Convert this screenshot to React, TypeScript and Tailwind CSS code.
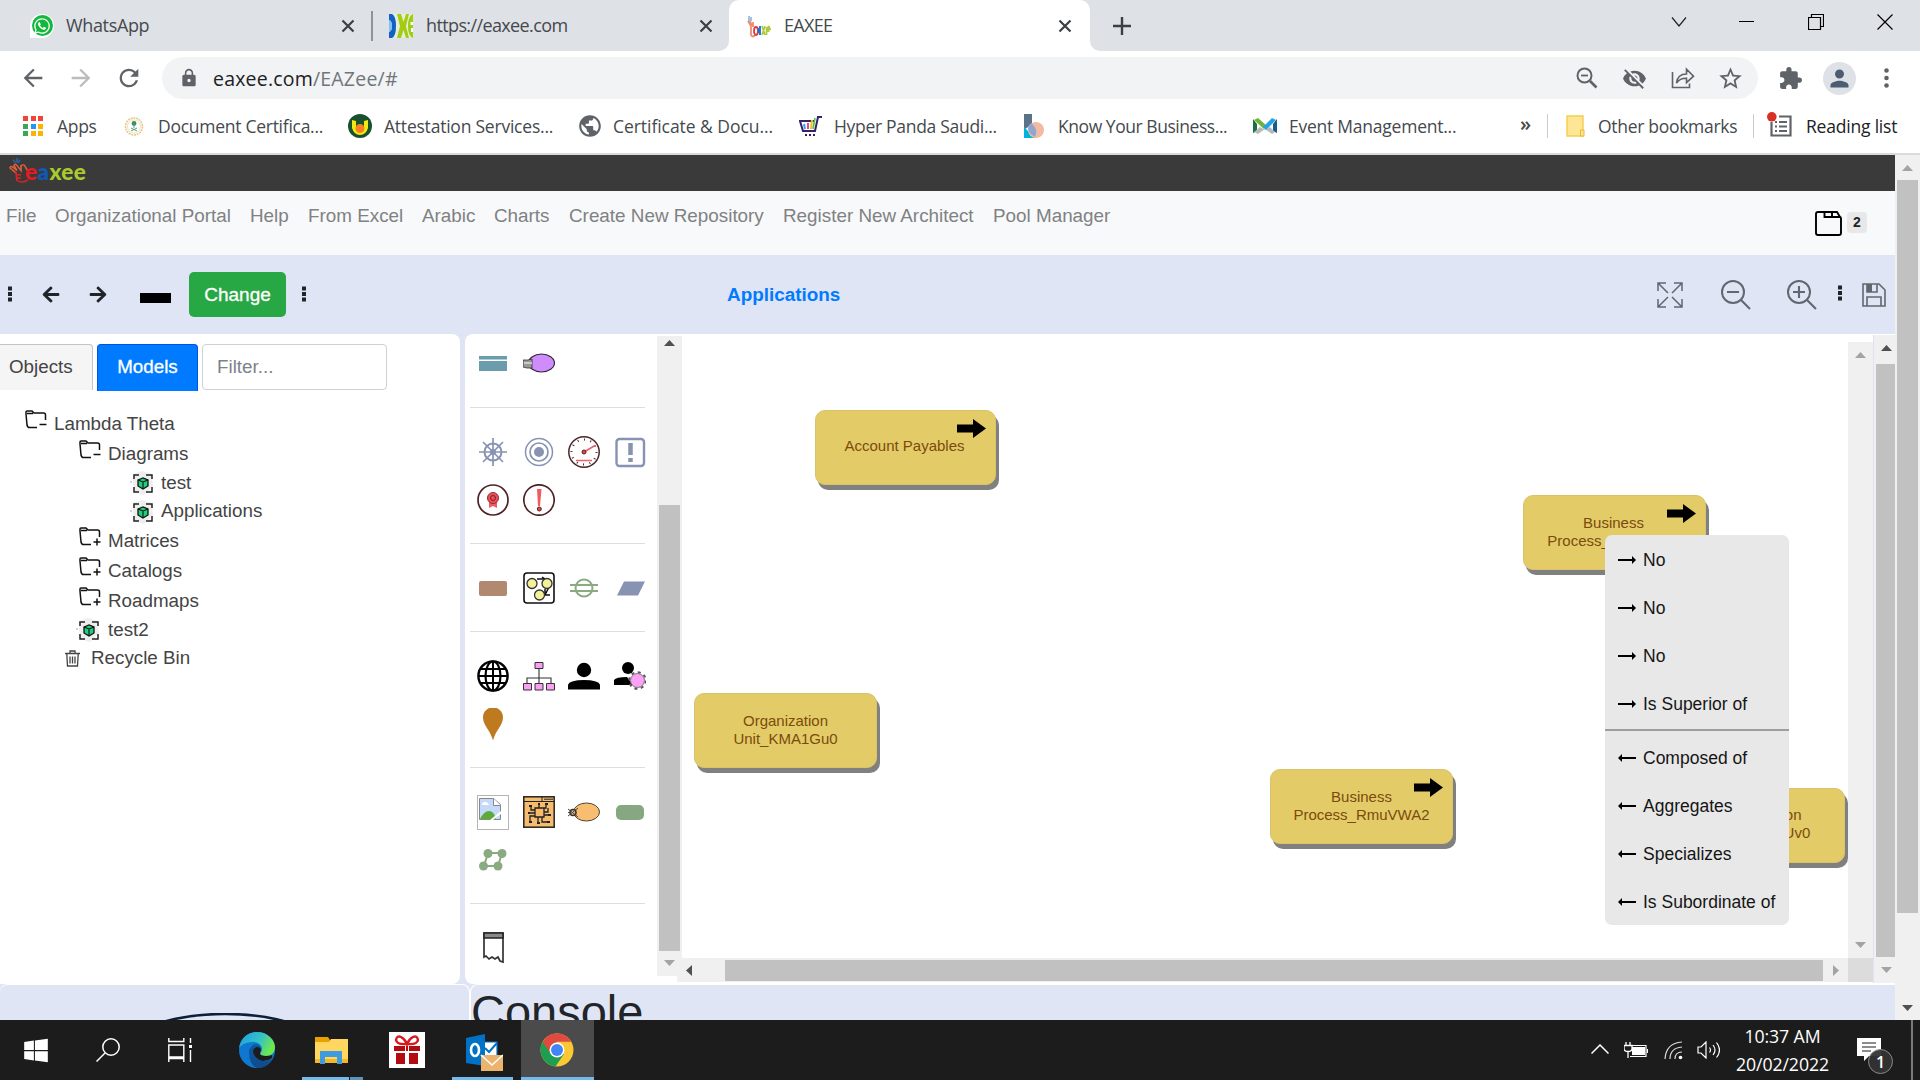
import React from "react";
import { FaArrowLeft, FaArrowRight, FaWhatsapp, FaWindows } from "react-icons/fa";
import {
  MdArrowBack, MdArrowForward, MdRefresh, MdLock, MdExtension, MdStarBorder, MdPerson, MdVisibilityOff, MdPublic,
} from "react-icons/md";

type P = { children?: React.ReactNode; c?: string };
const S = ({ v, c, children }: { v: string; c: string; children: React.ReactNode }) => (
  <svg viewBox={v} className={"shrink-0 block " + c} fill="none" preserveAspectRatio="none">{children}</svg>
);
const T = ({ c = "", children }: P) => (
  <span className={"block shrink-0 whitespace-nowrap " + c}>{children}</span>
);
const Tri = ({ d, c }: { d: "u" | "d" | "l" | "r"; c: string }) => {
  const pts = { u: "0,6 5.5,0 11,6", d: "0,0 5.5,6 11,0", l: "6,0 0,5.5 6,11", r: "0,0 6,5.5 0,11" }[d];
  const vert = d === "u" || d === "d";
  return <S v={vert ? "0 0 11 6" : "0 0 6 11"} c={vert ? "w-[11px] h-[6px]" : "w-[6px] h-[11px]"}><polygon points={pts} fill={c} /></S>;
};
const X = ({ c = "" }: P) => (
  <S v="0 0 14 14" c={"w-[14px] h-[14px] " + c}><path d="M1.5 1.5l11 11M12.5 1.5l-11 11" stroke="#3c4043" strokeWidth="2.2" /></S>
);

const Hand = () => (
  <>
    <path d="M4 2l3 4M8 0v5M11 2l-2 4" stroke="#2a5f98" strokeWidth="1.8" />
    <path d="M7 18L1 12q0-3 3-1l4 4-3-6q1-3 3 0l4 6 0-6q3-2 4 1l3 6" stroke="#e0603c" strokeWidth="1.6" />
    <path d="M7 17l1 10q6 4 11-1M7 20h5M7 24h5" stroke="#d82424" strokeWidth="1.8" />
  </>
);

function TabStrip() {
  return (
    <div className="flex h-[51px] items-center bg-[#dee1e6] text-[18px] tracking-[-0.35px] text-[#45494d]">
      <div className="flex w-[371px] items-center pl-[30px]">
        <span className="flex h-6 w-6 items-center justify-center rounded-full rounded-bl-none bg-white"><span className="flex h-[21px] w-[21px] items-center justify-center rounded-full bg-[#12b83c]"><FaWhatsapp className="h-[18px] w-[18px] text-white" /></span></span>
        <T c="ml-3 w-[275px]">WhatsApp</T>
        <X />
      </div>
      <div className="h-[30px] w-[2px] bg-[#909398]" />
      <div className="flex w-[356px] items-center pl-4">
        <S v="0 0 24 24" c="w-6 h-6">
          <rect width="24" height="24" fill="#e6eedb" />
          <path d="M0 0h3q4 2 4 12T3 24H0v-6q3-1 3-6T0 6z" fill="#1261c4" /><path d="M0 6q3 1 3 6t-3 6z" fill="#7fc2ee" />
          <path d="M8 0h4l2.500 8L17 0h3l-3 12 3 12h-3l-2.500-8L12 24H8l3-12z" fill="#a5cc12" /><path d="M24 0q-5 2-5 12t5 12z" fill="#9bd00f" /><path d="M21.500 8H24v3h-2.500zM22 14h2v4h-2z" fill="#fff" />
        </S>
        <T c="ml-[13px] w-[273px] tracking-[-0.62px]">https://eaxee.com</T>
        <X />
      </div>
      <div className="relative flex h-full w-[361px] items-center rounded-t-[10px] bg-white pl-[18px]">
        <span className="absolute -left-2.5 bottom-0 h-2.5 w-2.5 overflow-hidden bg-white"><span className="block h-2.5 w-2.5 rounded-br-[10px] bg-[#dee1e6]" /></span>
        <span className="absolute -right-2.5 bottom-0 h-2.5 w-2.5 overflow-hidden bg-white"><span className="block h-2.5 w-2.5 rounded-bl-[10px] bg-[#dee1e6]" /></span>
        <S v="0 0 24 24" c="w-6 h-6">
          <path d="M2 2v5M4 3v4" stroke="#7fb0dc" strokeWidth="1.5" /><path d="M1 7l3 5v9q2 3 4 0M3 7l2 5M6 8v5" stroke="#f08a70" strokeWidth="1.8" />
          <ellipse cx="9" cy="17" rx="2" ry="4" stroke="#e23a3a" strokeWidth="1.8" /><path d="M13 12v9M11.500 14v5" stroke="#2a6fd0" strokeWidth="1.9" /><path d="M15 12l3 9M18 12l-3 9M19.500 21v-8l2 5v-6l2 4" stroke="#a9cc3c" strokeWidth="1.7" />
        </S>
        <T c="ml-[13px] w-[274px] tracking-[-0.7px]">EAXEE</T>
        <X />
      </div>
      <S v="0 0 18 18" c="ml-[23px] w-[18px] h-[18px]"><path d="M9 0v18M0 9h18" stroke="#3c4043" strokeWidth="2.4" /></S>
      <S v="0 0 16 10" c="ml-[540px] w-[16px] h-[10px] -mt-[8px]"><path d="M1 .5l7 8.5 7-8.5" stroke="#222" strokeWidth="1.2" /></S>
      <div className="-mt-[8px] ml-[52px] h-[1px] w-[15px] bg-black" />
      <S v="0 0 16 16" c="ml-[54px] w-[16px] h-[16px] -mt-[8px]"><path d="M.5 3.5h12v12H.5zM3.5 3.5v-3h12v12h-3" stroke="#000" strokeWidth="1.2" /></S>
      <S v="0 0 16 16" c="ml-[53px] w-[16px] h-[16px] -mt-[8px]"><path d="M.5.5l15 15M15.5.5l-15 15" stroke="#000" strokeWidth="1.2" /></S>
    </div>
  );
}

function AddressBar() {
  return (
    <div className="flex h-[54px] items-center bg-white text-[#5f6368]">
      <MdArrowBack className="ml-[19px] h-7 w-7" />
      <MdArrowForward className="ml-[20px] h-7 w-7 text-[#babcbe]" />
      <MdRefresh className="ml-[20px] h-7 w-7" />
      <div className="ml-[19px] flex h-[42px] w-[1596px] items-center rounded-full bg-[#f1f3f4]">
        <MdLock className="ml-[17px] h-[20px] w-[20px]" />
        <T c="ml-[14px] mt-[1px] w-[1360px] text-[19.5px] tracking-[0.2px] text-[#70757a]"><span className="text-[#202124]">eaxee.com</span>/EAZee/#</T>
        <S v="0 0 22 22" c="ml-[3px] w-[22px] h-[22px]"><circle cx="8.5" cy="8.5" r="7" stroke="#5f6368" strokeWidth="2" /><path d="M14 14l6.5 6.5" stroke="#5f6368" strokeWidth="2.6" /><path d="M5 8.500h7" stroke="#5f6368" strokeWidth="1.8" /></S>
        <MdVisibilityOff className="ml-[24px] h-[25px] w-[25px]" />
        <S v="0 0 24 22" c="ml-[24px] w-[24px] h-[22px]"><path d="M1.5 5v15.500h17v-4M5.500 16q1-9 10-9V2.200l7 7-7 6.500v-4.500Q9 11 5.500 16z" stroke="#5f6368" strokeWidth="1.6" /></S>
        <MdStarBorder className="ml-[22px] h-[27px] w-[27px]" />
      </div>
      <MdExtension className="ml-[20px] h-[25px] w-[25px]" />
      <span className="ml-[20px] flex h-[33px] w-[33px] items-center justify-center rounded-full bg-[#dee1e6]"><MdPerson className="h-[27px] w-[27px] text-[#4d5c70]" /></span>
      <S v="0 0 5 20" c="ml-[28px] w-[5px] h-[20px]"><circle cx="2.5" cy="2.5" r="2.3" fill="#5f6368" /><circle cx="2.5" cy="10" r="2.3" fill="#5f6368" /><circle cx="2.5" cy="17.5" r="2.3" fill="#5f6368" /></S>
    </div>
  );
}

const dots = ["#f44336", "#f44336", "#f44336", "#3aa757", "#2196f3", "#fbb400", "#3aa757", "#fbb400", "#fbb400"];
function Bookmarks() {
  return (
    <div className="flex h-[50px] items-center border-b-2 border-[#d8dadb] bg-white pb-[6px] text-[17.5px] tracking-[-0.3px] text-[#45494d]">
      <div className="ml-[23px] grid h-5 w-5 grid-cols-3 gap-[2.5px]">
        {dots.map((d, i) => <span key={i} style={{ background: d }} />)}
      </div>
      <T c="ml-[14px] w-[67px]">Apps</T>
      <S v="0 0 20 21" c="w-5 h-[21px]"><circle cx="10" cy="10.500" r="8.500" stroke="#e4c98a" strokeWidth="1.6" strokeDasharray="2 .8" /><circle cx="10" cy="10.500" r="6.600" stroke="#f0dfb8" /><circle cx="10" cy="7.500" r="2.400" fill="#3c8f60" /><path d="M10 8v4M7 12l6 3M13 12l-6 3" stroke="#5d9f77" /></S>
      <T c="ml-[14px] w-[190px] tracking-[-0.27px]">Document Certifica...</T>
      <S v="0 0 24 24" c="w-6 h-6"><circle cx="12" cy="12" r="12" fill="#19502f" /><path d="M4 6l4 1v6q4 5 8 0V7l4-1v8q-2 7-8 7t-8-7z" fill="#f4e813" /><circle cx="12" cy="14.500" r="4.500" fill="#f58220" /></S>
      <T c="ml-[12px] w-[193px] tracking-[-0.22px]">Attestation Services...</T>
      <MdPublic className="h-[26px] w-[26px] shrink-0 text-[#5f6368]" />
      <T c="ml-[10px] w-[186px] tracking-[-0.05px]">Certificate &amp; Docu...</T>
      <S v="0 0 24 22" c="w-6 h-[22px]"><path d="M23 2h-4l-3 14H4L1 6h15" stroke="#34216e" strokeWidth="2" /><path d="M6 14l-1-5" stroke="#2ba7e0" strokeWidth="2" /><path d="M9 14V8" stroke="#e7439b" strokeWidth="2" /><path d="M12 14l1-9" stroke="#f4c20d" strokeWidth="2" /><path d="M14 14l2-11" stroke="#5ac04c" strokeWidth="1.6" /><path d="M6 20h10" stroke="#34216e" strokeWidth="2" strokeDasharray="2 2" /></S>
      <T c="ml-[11px] w-[190px]">Hyper Panda Saudi...</T>
      <S v="0 0 20 24" c="w-5 h-6"><path d="M0 0h8v10L0 16z" fill="#5b7389" /><path d="M0 13l11 11H0z" fill="#00b4dc" /><circle cx="12" cy="16" r="8" fill="#f3b9a2" /><path d="M7 9q8 6 4 14-7-4-7-9z" fill="#8fa6cf" /></S>
      <T c="ml-[14px] w-[195px] tracking-[-0.45px]">Know Your Business...</T>
      <S v="0 0 24 16" c="w-6 h-4"><path d="M0 1l4 5v7l-4 2z" fill="#1d6e3c" /><path d="M24 1l-4 5v7l4 2z" fill="#175d8c" /><path d="M1 14l6-5 5 3 5-3 5 5-3 2-7-5-7 5z" fill="#b5b9be" /><path d="M1 2l4-2 9 8-3 3z" fill="#6cb33f" /><path d="M23 2l-4-2-9 9 3 3z" fill="#27a3e2" /></S>
      <T c="ml-[12px] w-[231px] tracking-[-0.24px]">Event Management...</T>
      <T c="w-[27px] text-[20px] font-semibold -mt-1">»</T>
      <div className="h-6 w-px bg-[#caccce]" />
      <S v="0 0 19 22" c="ml-[18px] w-[19px] h-[22px]"><path d="M1 1h16v20H1z" fill="#ffe596" stroke="#f6cd4c" strokeWidth="1.4" /><path d="M14.500 15h3.500v6h-3.500z" fill="#ffe596" stroke="#e8b830" /></S>
      <T c="ml-[13px] w-[155px]">Other bookmarks</T>
      <div className="h-6 w-px bg-[#caccce]" />
      <S v="0 0 26 25" c="ml-[13px] -mt-1 w-[26px] h-[25px]"><path d="M4.500 10v13.500h19v-19H12" stroke="#5f6368" strokeWidth="2.200" /><path d="M8 10h2M8 14.500h2M8 19h2M12 10h8M12 14.500h8M12 19h8" stroke="#5f6368" strokeWidth="2.200" /><circle cx="4.800" cy="4.800" r="4.800" fill="#d93025" /></S>
      <T c="ml-[13px] text-[#202124] tracking-[-0.2px]">Reading list</T>
    </div>
  );
}

const Dots = ({ c = "" }: P) => (
  <S v="0 0 4 16" c={"w-1 h-4 " + c}><path d="M0 .5h4v4H0zM0 6h4v4H0zM0 11.500h4v4H0z" fill="#212529" /></S>
);

function Toolbar() {
  const g = "#62666e";
  return (
    <div className="flex h-[79px] items-center bg-[#e0e5f5]">
      <Dots c="ml-[8px] -mt-[2px]" />
      <FaArrowLeft className="ml-[30px] h-[19px] w-[18px] text-[#212529]" />
      <FaArrowRight className="ml-[29px] h-[19px] w-[18px] text-[#212529]" />
      <div className="ml-[33px] mt-[6px] h-[10px] w-[31px] bg-black" />
      <div className="ml-[18px] flex h-[45px] w-[97px] items-center justify-center rounded-[5px] bg-[#28a745] pt-[1px] text-[19px] text-white [-webkit-text-stroke:0.3px_white]">Change</div>
      <Dots c="ml-[16px] -mt-[2px]" />
      <T c="ml-[421px] mt-[1px] w-[930px] text-[18.900px] font-bold text-[#007bff]">Applications</T>
      <S v="0 0 26 26" c="w-[26px] h-[26px]"><path d="M1 9V1h8M17 1h8v8M25 17v8h-8M9 25H1v-8M1 1l10 10M25 1L15 11M25 25L15 15M1 25l10-10" stroke={g} strokeWidth="1.5" /></S>
      <S v="0 0 30 30" c="ml-[38px] w-[30px] h-[30px]"><circle cx="12" cy="12" r="11" stroke={g} strokeWidth="2" /><path d="M6 12h12M19.500 19.500L29 29" stroke={g} strokeWidth="2.100" /></S>
      <S v="0 0 30 30" c="ml-[36px] w-[30px] h-[30px]"><circle cx="12" cy="12" r="11" stroke={g} strokeWidth="2" /><path d="M6 12h12M12 6v12M19.500 19.500L29 29" stroke={g} strokeWidth="2.100" /></S>
      <Dots c="ml-[21px] -mt-[4px]" />
      <S v="0 0 24 24" c="ml-[20px] w-6 h-6"><path d="M1 1h16l6 6v16H1zM5 23v-9h14v9M5 1v8h10V1" stroke={g} strokeWidth="1.600" /><path d="M5 1h5v8H5z" fill={g} /></S>
    </div>
  );
}

const Folder = ({ plus }: { plus?: boolean }) => (
  <S v="0 0 22 19" c="w-[22px] h-[19px]">
    <path d="M12 17.500H4.500Q2.500 17.500 2 15L1 4V2Q1 1 2 1h5l2 2h9.500q2 0 2 2v5M2 3.500h6" stroke="#111" strokeWidth="1.500" />
    <path d={plus ? "M14.500 15h7M18 11.500v7" : "M14.500 14.500h7"} stroke="#111" strokeWidth="1.500" />
  </S>
);
const FolderSlot = ({ plus }: { plus?: boolean }) => <span className="-mt-[10px]"><Folder plus={plus} /></span>;
const Cube = () => (
  <S v="0 0 24 26" c="w-6 h-[26px]">
    <path d="M3 4l9-3 10 3 1 12-9 9-9-3-2-9z" fill="#eeeeee" />
    <circle cx="1" cy="12" r="1" fill="#b7c6e0" />
    <path d="M4 9V5h5M16 5h6v4M22 17v5h-6M9 22H4v-5" stroke="#222" strokeWidth="1.500" />
    <path d="M8 10l5-2 5 2v6l-5 3-5-3z" fill="#1fcf7d" stroke="#111" strokeWidth="1.300" /><path d="M8 10l5 2 5-2M13 12v6" stroke="#111" strokeWidth="1.100" />
  </S>
);

const tree: { h: string; p: string; icon: React.ReactNode; t: string }[] = [
  { h: "h-[30px]", p: "pl-[25px] gap-[7px]", icon: <FolderSlot />, t: "Lambda Theta" },
  { h: "h-[30px]", p: "pl-[79px] gap-[7px]", icon: <FolderSlot />, t: "Diagrams" },
  { h: "h-[28px]", p: "pl-[130px] gap-[7px]", icon: <Cube />, t: "test" },
  { h: "h-[29px]", p: "pl-[130px] gap-[7px]", icon: <Cube />, t: "Applications" },
  { h: "h-[30px]", p: "pl-[79px] gap-[7px]", icon: <FolderSlot plus />, t: "Matrices" },
  { h: "h-[30px]", p: "pl-[79px] gap-[7px]", icon: <FolderSlot plus />, t: "Catalogs" },
  { h: "h-[30px]", p: "pl-[79px] gap-[7px]", icon: <FolderSlot plus />, t: "Roadmaps" },
  { h: "h-[28px]", p: "pl-[76px] gap-[8px]", icon: <Cube />, t: "test2" },
  { h: "h-[28px]", p: "pl-[65px] gap-[11px]", icon: <S v="0 0 15 17" c="w-[15px] h-[17px]"><path d="M0 3.500h15M5 3V1h5v2M1.800 4l.7 12h10l.7-12M5 6.500v7M7.500 6.500v7M10 6.500v7" stroke="#444" strokeWidth="1.300" /></S>, t: "Recycle Bin" },
];

function LeftPanel() {
  return (
    <div className="h-[650px] w-[460px] shrink-0 rounded-r-[8px] bg-white pt-[10px] text-[18.800px] text-[#444]">
      <div className="flex">
        <div className="h-[46px] w-[93px] rounded-tr-[4px] border border-l-0 border-b-0 border-[#c4c4c4] bg-[#f5f5f5] pl-[9px] leading-[43px]">Objects</div>
        <div className="ml-1 h-[47px] w-[101px] rounded-t-[4px] border border-b-0 border-[#0056e0] bg-[#007bff] text-center leading-[43px] text-white [-webkit-text-stroke:0.3px_white]">Models</div>
        <div className="ml-1 h-[46px] w-[185px] rounded-[4px] border border-[#ced0d8] pl-[14px] leading-[43px] text-[#7a828a]">Filter...</div>
      </div>
      <div className="mt-[18px]">
        {tree.map((r) => (
          <div key={r.t} className={"flex items-center " + r.h + " " + r.p}>{r.icon}<T>{r.t}</T></div>
        ))}
      </div>
    </div>
  );
}

const I = ({ children }: P) => <S v="0 0 32 32" c="w-8 h-8">{children}</S>;
const b = "#8893b3", m = "#4d2326", gr = "#8aab82";
const sections: { c: string; icons: React.ReactNode[] }[] = [
  { c: "h-[72px] pt-[3px]", icons: [
    <I><path d="M2 9h28v3.500H2zM2 14h28v10H2z" fill="#6b9cab" /></I>,
    <I><ellipse cx="18.500" cy="16" rx="13" ry="9" fill="#cf8cfb" stroke="#33263c" strokeWidth="1.200" /><path d="M0 13h5l4-1v9H4l-4-1z" fill="#999" stroke="#333" strokeWidth=".8" /><path d="M1 16h8" stroke="#ddd" strokeWidth="1.500" /></I>,
  ] },
  { c: "h-[136px] pt-[20px]", icons: [
    <I><circle cx="16" cy="16" r="8.500" stroke={b} strokeWidth="2" /><circle cx="16" cy="16" r="3" fill={b} /><path d="M16 2v28M2 16h28M6 6l20 20M26 6L6 26" stroke={b} strokeWidth="1.700" /></I>,
    <I><circle cx="16" cy="16" r="13.500" stroke={b} strokeWidth="1.500" /><circle cx="16" cy="16" r="9" stroke={b} strokeWidth="1.700" /><circle cx="16" cy="16" r="5" fill={b} /></I>,
    <I><circle cx="16" cy="16" r="15.200" stroke={m} strokeWidth="1.500" /><circle cx="16" cy="16" r="12.500" stroke="#333" strokeWidth="2.200" strokeDasharray="1 5.500" /><path d="M8 24.500h16M16 16l11-6.500" stroke="#f26066" strokeWidth="1.600" /><circle cx="16" cy="16" r="2" fill="#e44" stroke={m} /></I>,
    <I><rect x="2.500" y="3" width="27.500" height="27" rx="3" stroke={b} strokeWidth="2.400" /><path d="M16.500 7v12M16.500 22v4" stroke={b} strokeWidth="4.500" /></I>,
    <I><circle cx="16" cy="16" r="15" stroke={m} strokeWidth="1.700" /><path d="M12 18h8v6l-4-2-4 2z" fill="#f25a60" /><circle cx="16" cy="14" r="5.500" fill="#ee5058" stroke="#8f2b33" /><circle cx="16" cy="14" r="2.500" stroke="#7c1c24" /></I>,
    <I><circle cx="16" cy="16" r="15.200" stroke={m} strokeWidth="1.700" /><path d="M14 5h4.500L17 22h-2z" fill="#f25a60" /><circle cx="16.300" cy="25" r="2" fill="#e44" stroke={m} /></I>,
  ] },
  { c: "h-[88px] pt-[20px]", icons: [
    <I><rect x="2" y="9" width="28" height="15" rx="2" fill="#b18870" /></I>,
    <I><rect x="1" y="1" width="30" height="30" rx="3" stroke="#111" strokeWidth="1.600" /><path d="M14 7h8l-3-2M26 15l-4 8M22 17v6h5" stroke="#111" strokeWidth="1.500" /><circle cx="9" cy="11.500" r="5" fill="#f5f199" stroke="#333" strokeWidth="1.300" /><circle cx="24" cy="11.500" r="5" fill="#f5f199" stroke="#333" strokeWidth="1.300" /><circle cx="16.500" cy="23" r="5" fill="#f5f199" stroke="#333" strokeWidth="1.300" /></I>,
    <I><circle cx="16" cy="16" r="8.500" stroke={gr} strokeWidth="2" /><path d="M2 13h28M2 19h28" stroke={gr} strokeWidth="2.200" /></I>,
    <I><path d="M10 9.500h21l-7 14H3z" fill={b} /></I>,
  ] },
  { c: "h-[136px] pt-[20px]", icons: [
    <I><circle cx="16" cy="16" r="14.600" stroke="#000" strokeWidth="2.400" /><ellipse cx="16" cy="16" rx="7.500" ry="14.500" stroke="#000" strokeWidth="2.200" /><path d="M16 1v30M1 16h30M3 9h26M3 23h26" stroke="#000" strokeWidth="2" /></I>,
    <I><path d="M16 8v16M4 24v-6h24v6" stroke="#333" strokeWidth="1.100" /><path d="M12 2.500h8v6h-8zM.5 23.500h8v6.500h-8zM12 23.500h8v6.500h-8zM23.500 23.500h8v6.500h-8z" fill="#fb9ff5" stroke="#333" /></I>,
    <I><circle cx="16" cy="10" r="7.200" fill="#000" /><path d="M0 29.500v-5Q2 20 16 20t16 4.500v5z" fill="#000" /></I>,
    <I><circle cx="14" cy="8" r="6" fill="#000" /><path d="M0 25v-5q2-3 13-3l6 8z" fill="#000" /><circle cx="23.500" cy="20.500" r="8.300" stroke="#555" strokeWidth="2" strokeDasharray="3 3.520" /><circle cx="23.500" cy="20.500" r="7" fill="#fca1f8" stroke="#777" /></I>,
    <I><path d="M16-.5C10-.5 6 4 6 9.500c0 8 7 12 10 23 3-11 10-15 10-23C26 4 22-.5 16-.5z" fill="#be7a1e" /></I>,
  ] },
  { c: "h-[136px] pt-[20px]", icons: [
    <S v="0 0 32 35" c="w-8 h-[35px]"><rect x=".5" y=".5" width="31" height="34" fill="#fff" stroke="#b5b5b5" /><path d="M2.500 3.500h14l7 6v15h-21z" fill="#c5dafa" stroke="#888" /><path d="M16.500 3.500v7h7" fill="#fff" stroke="#888" /><path d="M5 9q0-2 3-2t4 3H5z" fill="#fff" /><path d="M3 24q4-8 9-8t7 8z" fill="#5aac36" /><path d="M13 25l11-9v3l-8 6z" fill="#fff" /></S>,
    <I><rect x=".8" y=".8" width="30.400" height="30.400" fill="#f6bb6c" stroke="#222" strokeWidth="1.500" /><path d="M1 5.500h30M19 1v4M21 3.200h9" stroke="#222" /><path d="M12 12h9v9h-9zM16 12V8M19 12h4V8M12 14H8v-4M12 17H5M12 20H7v6M15 21v6M19 21v5h6M21 19h5M21 16h4v-4" stroke="#222" strokeWidth="1.300" /><path d="M15 7h2v2h-2zM22 7h3v2h-3zM6 9h3v2H6zM5 16h2v2H5zM6 25h3v2H6zM14 26h3v2h-3zM24 25h3v2h-3zM25 18h3v2h-3z" fill="#222" /></I>,
    <I><ellipse cx="18.500" cy="16" rx="13" ry="9" fill="#f8bd70" stroke="#4f4336" /><circle cx="5" cy="16.500" r="3" stroke="#333" strokeWidth="1.500" fill="#f8bd70" /><path d="M0 13l10 8M0 20l10-8M0 16.500h2" stroke="#444" /></I>,
    <I><rect x="2" y="9" width="28" height="15" rx="5" fill="#86a781" /></I>,
    <I><path d="M11 9h14L21 22H7z" stroke={gr} strokeWidth="2" /><circle cx="11" cy="9.500" r="4.500" fill={gr} /><circle cx="25" cy="9.500" r="4.500" fill={gr} /><circle cx="6.500" cy="22" r="4.500" fill={gr} /><circle cx="21" cy="22" r="4.500" fill={gr} /></I>,
  ] },
  { c: "h-[75px] pt-[20px] border-b-0", icons: [
    <I><path d="M7 1h19v29l-3-1-2-4-3 2-3-2-3 2-3-3-2 1z" fill="#fff" stroke="#333" strokeWidth="1.700" /><path d="M7 1h19v5H7z" fill="#888" stroke="#222" strokeWidth="1.500" /></I>,
  ] },
];

function Palette() {
  return (
    <div className="w-[191px] shrink-0 overflow-hidden pl-[4px]">
      {sections.map((s, i) => (
        <div key={i} className={"w-[175px] border-b border-[#dedede] " + s.c}>
          <div className="grid w-[183px] grid-cols-4">
            {s.icons.map((ic, j) => <div key={j} className="flex h-12 items-center justify-center">{ic}</div>)}
          </div>
        </div>
      ))}
    </div>
  );
}

function Node({ c, lines, arrow, tc = "" }: { c: string; lines: string[]; arrow?: boolean; tc?: string }) {
  return (
    <div className={"absolute h-[75px] rounded-[10px] border border-[#d9c269] bg-[#e3cb68] shadow-[3px_5px_0_#808080] " + c}>
      <div className={"flex h-[72px] flex-col items-center justify-center text-[15px] leading-[17.600px] text-[#7b4b0c] " + tc}>
        {lines.map((l) => <T key={l}>{l}</T>)}
      </div>
      {arrow && <S v="0 0 29 19" c="absolute right-[9px] top-[8px] w-[29px] h-[19px]"><path d="M0 5.500h16V0l13 9.500L16 19v-5.500H0z" fill="#000" /></S>}
    </div>
  );
}

function MenuItem({ t, back }: { t: string; back?: boolean }) {
  return (
    <div className="flex h-12 items-center gap-[7px] pl-[13px] pt-[2px] text-[17.500px] text-[#151515]">
      <S v="0 0 18 8" c="w-[18px] h-[8px]"><path d={back ? "M4 3H18V5H4V8L0 4L4 0Z" : "M14 3H0V5H14V8L18 4L14 0Z"} fill="#000" /></S>
      <T>{t}</T>
    </div>
  );
}

function Canvas() {
  return (
    <div className="flex w-[1191px] shrink-0 flex-col">
      <div className="flex h-[622px]">
        <div className="relative w-[1166px] shrink-0 bg-white">
          <Node c="left-[133px] top-[74px] w-[181px]" lines={["Account Payables"]} arrow tc="-mt-[1px] -translate-x-[1px]" />
          <Node c="left-[12px] top-[357px] w-[183px]" lines={["Organization", "Unit_KMA1Gu0"]} />
          <Node c="left-[588px] top-[433px] w-[183px]" lines={["Business", "Process_RmuVWA2"]} arrow />
          <Node c="left-[841px] top-[159px] w-[183px]" lines={["Business", "Process_3VWum01"]} arrow tc="-translate-x-[1px]" />
          <Node c="left-[981px] top-[452px] w-[182px]" lines={["Organization", "Unit_KMA1Uv0"]} tc="-mt-[1px] translate-x-[5px]" />
          <div className="absolute left-[923px] top-[199px] z-10 h-[390px] w-[184px] rounded-[7px] bg-[#e8e8e8]">
            <MenuItem t="No" /><MenuItem t="No" /><MenuItem t="No" /><MenuItem t="Is Superior of" />
            <div className="mt-[2px] mb-[2px] h-[2px] bg-[#9e9e9e]" />
            <MenuItem t="Composed of" back /><MenuItem t="Aggregates" back /><MenuItem t="Specializes" back /><MenuItem t="Is Subordinate of" back />
          </div>
        </div>
        <div className="mt-[6px] flex w-[25px] flex-col items-center justify-between bg-[#f0f0f0] pt-[10px] pb-[10px]"><Tri d="u" c="#a3a3a3" /><Tri d="d" c="#a3a3a3" /></div>
      </div>
      <div className="flex h-[24px]">
        <div className="-ml-[5px] flex w-[1171px] shrink-0 items-center bg-[#f0f0f0] pl-[9px]">
          <Tri d="l" c="#505050" /><div className="ml-[33px] h-[21px] w-[1098px] bg-[#c1c1c1]" /><span className="ml-[10px]"><Tri d="r" c="#a3a3a3" /></span>
        </div>
        <div className="w-[25px] bg-[#dcdcdc]" />
      </div>
    </div>
  );
}

function Taskbar() {
  return (
    <div className="flex h-[60px] items-center bg-[#1c1c1c] text-white">
      <FaWindows className="ml-[23px] h-[27px] w-[26px]" />
      <S v="0 0 24 24" c="ml-[47px] w-6 h-6"><circle cx="15" cy="9" r="8.200" stroke="#fff" strokeWidth="1.500" /><path d="M9 15L.5 23.500" stroke="#fff" strokeWidth="1.500" /></S>
      <S v="0 0 24 24" c="ml-[48px] w-6 h-6"><path d="M.8 0v3.500h15V0M.8 7h15v12h-15zM.8 24v-3.500h15V24M22.500 0v5M22.500 12v12" stroke="#fff" strokeWidth="1.400" /><path d="M21 7h3v3h-3z" fill="#fff" /></S>
      <S v="0 0 36 36" c="ml-[47px] w-9 h-9">
        <defs><linearGradient id="ea" x1="0" y1="0" x2="1" y2=".4"><stop stopColor="#1b9de2" /><stop offset=".6" stopColor="#35c1c8" /><stop offset="1" stopColor="#6be84e" /></linearGradient><linearGradient id="eb" x1="0" y1="0" x2="0" y2="1"><stop stopColor="#0c59a4" /><stop offset="1" stopColor="#114a8b" /></linearGradient></defs>
        <circle cx="18" cy="18" r="18" fill="#0e78d0" />
        <path d="M36 17v8l-4 11h6V17z" fill="#1c1c1c" />
        <path d="M0 17C1 7 8 0 18 0c11 0 18 8 18 15 0 6-4 9-9 9-4 0-6-1-6-2s2-2 2-5c0-4-4-7-9-7C7 10 1 13 0 17z" fill="url(#ea)" />
        <path d="M10 20c0-4 3-7 6-8 4 0 6 3 6 5-3-2-7 0-7 4 0 5 5 8 10 8 4 0 6-2 8-2-2 4-7 9-14 9-6-1-9-8-9-16z" fill="url(#eb)" />
        <path d="M14 20q0-4 4-5 3 0 4 2 0 2-1 4 0 3 6 3 4 0 6-1 .5 1 0 3-4 3-9 3-8-1-10-9z" fill="#1c1c1c" />
      </S>
      <div className="relative ml-[27px] flex h-full w-[61px] items-center justify-center">
        <S v="0 0 33 27" c="w-[33px] h-[27px] mr-[2px]"><path d="M0 0h13l2 3v5H0z" fill="#e8a200" /><path d="M0 5h14l2-3h17v23H0z" fill="#ffd65f" /><path d="M0 22h33v4H0z" fill="#f0b92c" /><path d="M5 14h22v13h-5v-7H10v7H5z" fill="#3f9be0" /></S>
        <span className="absolute bottom-0 left-0 h-[3px] w-[47px] bg-[#76b9ed]" /><span className="absolute bottom-0 right-0 h-[3px] w-[13px] bg-[#6291b8]" />
      </div>
      <S v="0 0 36 36" c="ml-[26px] w-9 h-9"><path d="M0 0h36v36H0z" fill="#fff" /><path d="M5 14h26v5H5zM7 21h9v11H7zM20 21h9v11h-9z" fill="#b40b10" /><path d="M16 14h1v18h-1zM19 14h1v18h-1z" fill="#fff" /><path d="M18 12Q8 13 7 8q1-5 5-3 4 2 6 7 2-5 6-7 4-2 5 3-1 5-11 4z" stroke="#d81920" strokeWidth="2.400" /></S>
      <div className="relative ml-[27px] flex h-full w-[61px] items-center justify-center">
        <S v="0 0 37 37" c="w-[37px] h-[37px] ml-[4px] mt-[5px]"><path d="M16 8h15v18H16z" fill="#fff" stroke="#0072c6" strokeWidth="1.200" /><path d="M19 14l4 4 8-9" stroke="#0072c6" strokeWidth="2" /><path d="M0 4l19-4v32L0 29z" fill="#0072c6" /><ellipse cx="9" cy="16" rx="4" ry="6" stroke="#fff" strokeWidth="2.600" /><path d="M15 21h22v16H15z" fill="#ecb36c" /><path d="M15 21l11 10 11-10" stroke="#fff" strokeWidth="1.600" /></S>
        <span className="absolute bottom-0 left-0 h-[3px] w-full bg-[#76b9ed]" />
      </div>
      <div className="relative ml-[8px] flex h-full w-[73px] items-center justify-center bg-[#4b4b4b]">
        <S v="0 0 34 34" c="w-[34px] h-[34px] mr-[1px]"><circle cx="17" cy="17" r="16.500" fill="#fcc934" /><path d="M17 17L2.700 8.700A16.500 16.500 0 0 0 15.500 33.400L24 21z" fill="#1e9e50" /><path d="M2.700 8.700A16.500 16.500 0 0 1 31.300 8.700H17L9.500 19z" fill="#e04a3f" /><circle cx="17" cy="17" r="7.500" fill="#fff" /><circle cx="17" cy="17" r="6" fill="#4285f4" /></S>
        <span className="absolute bottom-0 left-0 h-[3px] w-full bg-[#76b9ed]" />
      </div>
      <div className="ml-[997px] flex items-center">
        <S v="0 0 18 10" c="w-[18px] h-[10px] -mt-[2px]"><path d="M.5 9.500L9 1l8.500 8.500" stroke="#fff" strokeWidth="1.500" /></S>
        <S v="0 0 24 17" c="ml-[15px] w-6 h-[17px]"><path d="M6 3.500h16v11H6" stroke="#fff" strokeWidth="1.200" /><path d="M8 5h13v8H8zM23 7h1.500v4H23z" fill="#fff" /><path d="M2 0v3M6 0v3M0 3.500h8v3q0 3-4 3t-4-3zM4 9v7" stroke="#fff" strokeWidth="1.300" fill="#1c1c1c" /></S>
        <S v="0 0 19 19" c="ml-[16px] w-[19px] h-[19px]"><path d="M1 18Q2 2 18 1M6 18q0-11 12-12M11 18q0-7 7-7" stroke="#ddd" strokeWidth="1.200" /><circle cx="16.500" cy="16.500" r="1.800" fill="#fff" /></S>
        <S v="0 0 23 18" c="ml-[14px] w-[23px] h-[18px]"><path d="M1 6h3l5-5v16l-5-5H1zM12.500 6.500q2 2.500 0 5M16 4q4 5 0 10M19.500 1.500q6 7.500 0 15" stroke="#fff" strokeWidth="1.200" /></S>
      </div>
      <div className="ml-[11px] w-[103px] text-center text-[17.700px] leading-[28px] tracking-[-0.100px]">10:37 AM<br />20/02/2022</div>
      <div className="relative ml-[23px] h-6 w-6">
        <S v="0 0 24 24" c="w-6 h-6"><path d="M0 0h24v18H12l-5 5v-5H0z" fill="#fff" /><path d="M5 5h14M5 9h14M5 13h9" stroke="#1c1c1c" strokeWidth="1.200" /></S>
        <span className="absolute left-[11px] top-[11px] flex h-[25px] w-[25px] items-center justify-center rounded-full border border-[#888] bg-[#333]/95 text-[16px] font-semibold">1</span>
      </div>
      <div className="ml-[30px] h-full w-[2px] bg-[#7a7a7a]" />
    </div>
  );
}

const nav: [string, string][] = [
  ["File", "w-[49px]"], ["Organizational Portal", "w-[195px]"], ["Help", "w-[58px]"], ["From Excel", "w-[114px]"], ["Arabic", "w-[72px]"],
  ["Charts", "w-[75px]"], ["Create New Repository", "w-[214px]"], ["Register New Architect", "w-[210px]"], ["Pool Manager", "w-[120px]"],
];

export default function App() {
  return (
    <div className="h-[1080px] w-[1920px] overflow-hidden bg-white font-['Open_Sans',sans-serif]">
      <TabStrip />
      <AddressBar />
      <Bookmarks />
      <div className="flex h-[865px] overflow-hidden font-['Liberation_Sans',Arial,sans-serif]">
        <div className="w-[1895px] shrink-0 bg-[#e0e5f5]">
          <div className="flex h-[36px] bg-[#3a3a3a] pl-[9px] pt-[3px]">
            <S v="0 0 20 30" c="w-[20px] h-[25px]"><Hand /></S>
            <div className="-ml-[4px] mt-[3px] font-['Lato',sans-serif] text-[22.500px] font-black leading-[22px] tracking-[0.400px]"><span className="text-[#e31b23]">e</span><span className="text-[#1059b5]">a</span><span className="text-[#a9cb2e]">xee</span></div>
          </div>
          <div className="flex h-[64px] bg-[#f8f9fb] pl-[6px] pt-[10px] text-[18.850px] leading-[30px] text-[#808182]">
            {nav.map(([t, w]) => <T key={t} c={w}>{t}</T>)}
            <S v="0 0 27 25" c="ml-[702px] mt-[10px] w-[27px] h-[25px]"><path d="M3 1h19l3 5q1 0 1 2v14q0 2-2 2H3q-2 0-2-2V3q0-2 2-2zM9.500 1v5H25M17 1v5" stroke="#000" strokeWidth="1.900" /></S>
            <div className="ml-[5px] mt-[11px] h-[21px] w-[20px] rounded-[4px] bg-[#e8e8e8] text-center text-[14px] font-bold leading-[21px] text-[#212529]">2</div>
          </div>
          <Toolbar />
          <div className="flex">
            <LeftPanel />
            <div className="ml-[5px] flex h-[650px] flex-1 rounded-l-[8px] border-y border-l border-white bg-white pt-[1px]">
              <div className="flex h-[646px] w-[1407px] shrink-0">
                <Palette />
                <div className="flex h-[640px] w-[25px] shrink-0 flex-col items-center bg-[#f0f0f0] pt-[4px]">
                  <Tri d="u" c="#505050" /><div className="mt-[159px] h-[446px] w-[21px] bg-[#c1c1c1]" /><span className="mt-[9px]"><Tri d="d" c="#a3a3a3" /></span>
                </div>
                <Canvas />
              </div>
              <div className="-mt-[1px] flex h-[648px] w-[22px] shrink-0 flex-col items-center border-l border-[#dfe4f5] bg-[#f0f0f0] pt-[10px]">
                <span className="ml-[3px]"><Tri d="u" c="#505050" /></span><div className="ml-[2px] mt-[13px] h-[593px] w-[19px] bg-[#c1c1c1]" /><span className="ml-[3px] mt-[10px]"><Tri d="d" c="#a3a3a3" /></span>
              </div>
            </div>
          </div>
          <div className="flex">
            <div className="h-[60px] w-[470px] overflow-hidden rounded-t-[8px] border-r border-t border-white">
              <S v="0 0 200 60" c="ml-[125px] mt-[28px] w-[200px] h-[60px]"><ellipse cx="100" cy="61" rx="123" ry="60" stroke="#0b2038" strokeWidth="2.600" /></S>
            </div>
            <div className="h-[60px] flex-1 overflow-hidden rounded-tl-[8px] border-l border-t border-white text-[47px] leading-[54px] text-[#212529]">Console</div>
          </div>
        </div>
        <div className="flex w-[25px] flex-col items-center bg-[#f0f0f0] pt-[10px]">
          <Tri d="u" c="#a3a3a3" /><div className="mt-[9px] h-[733px] w-[21px] bg-[#c1c1c1]" /><span className="mt-[92px]"><Tri d="d" c="#505050" /></span>
        </div>
      </div>
      <Taskbar />
    </div>
  );
}
